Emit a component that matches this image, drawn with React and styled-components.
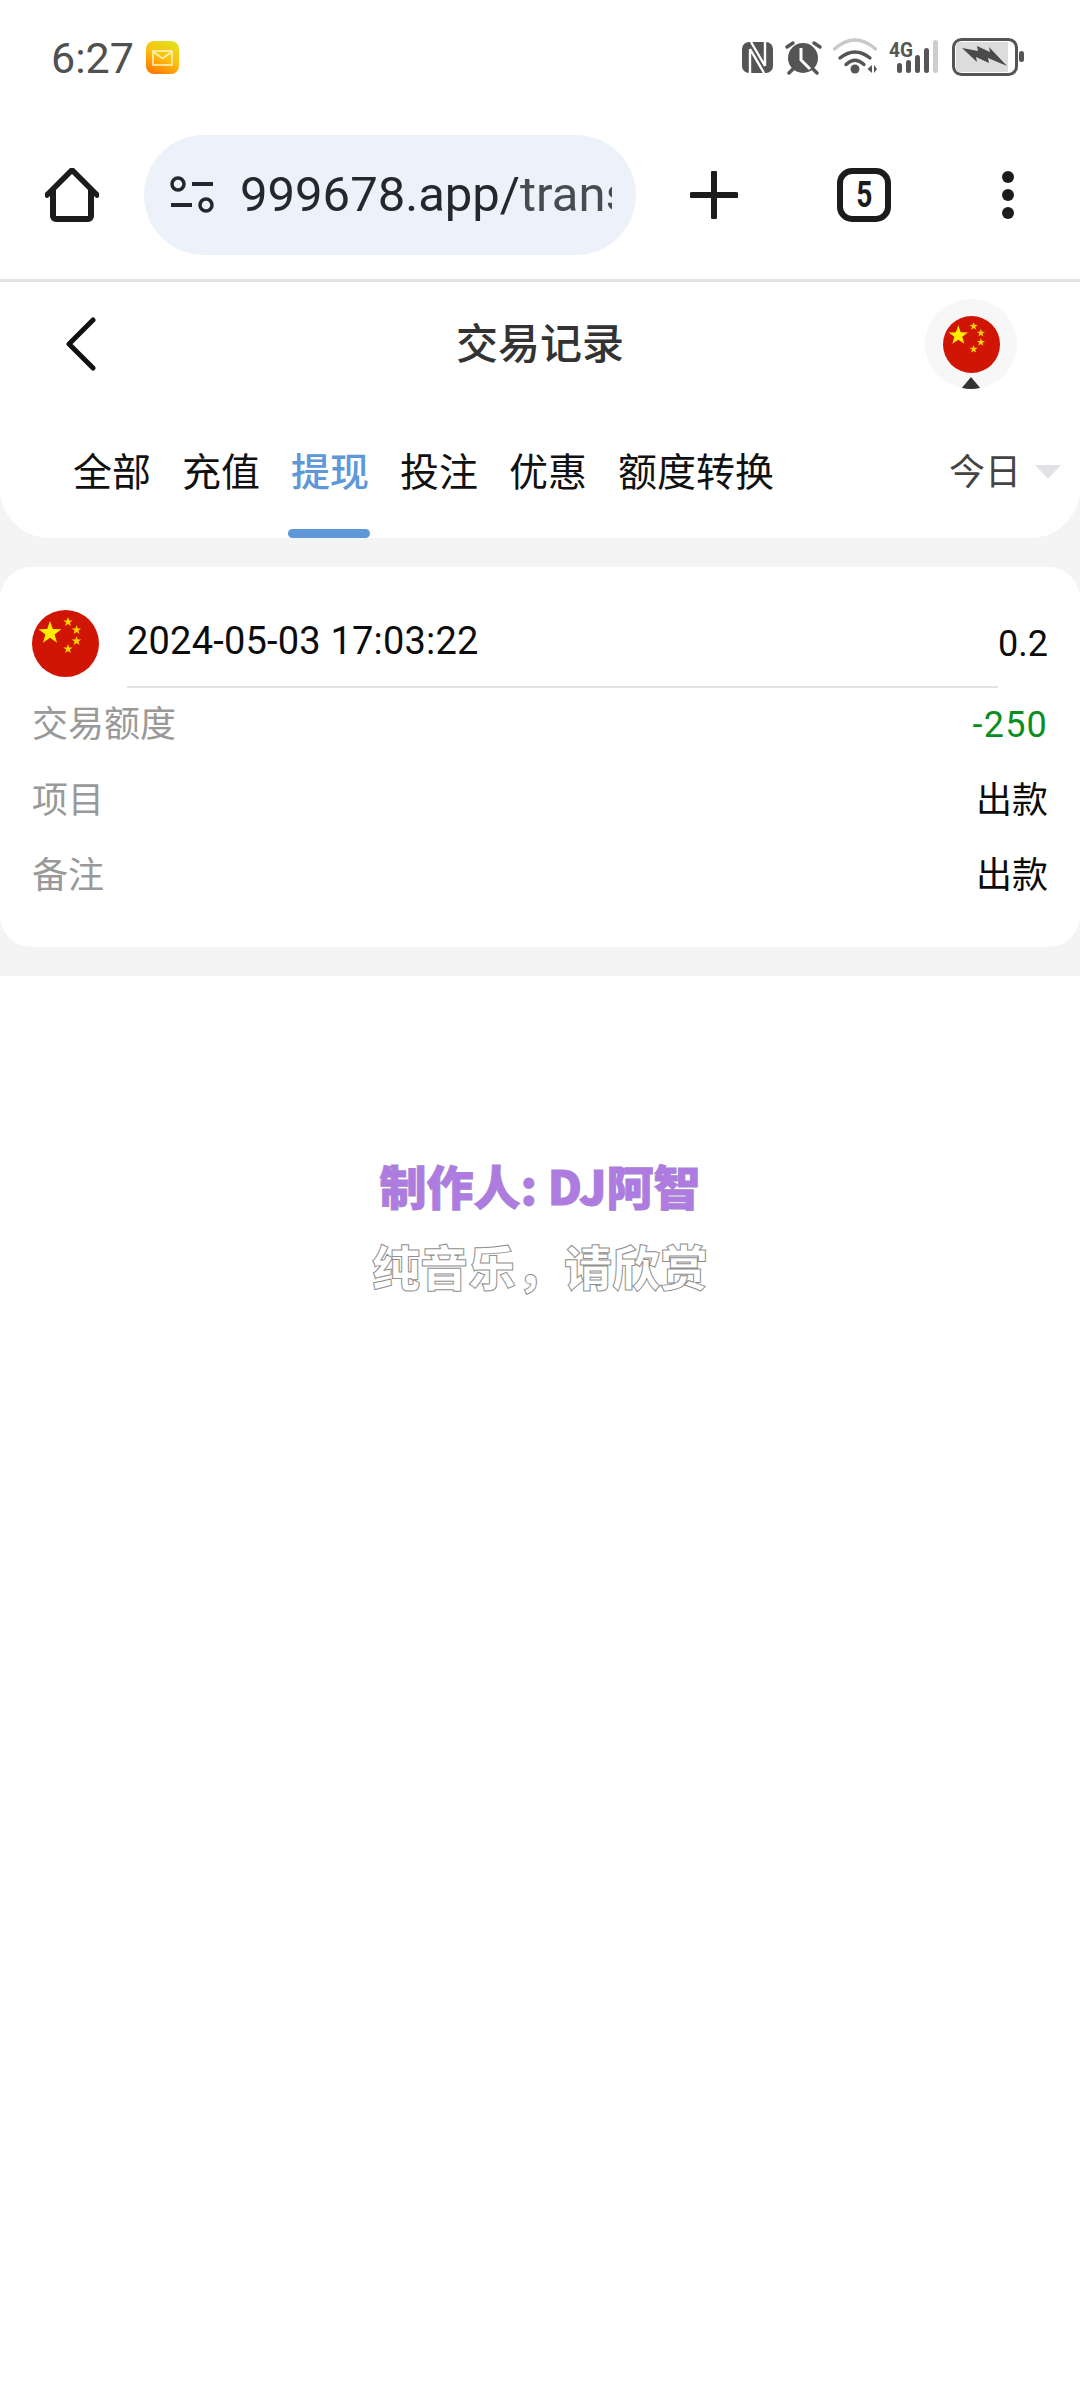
import React from 'react';
import styled, { createGlobalStyle } from 'styled-components';

const SANS = '"Roboto", "Noto Sans CJK SC", sans-serif';
const CJK = '"Noto Sans CJK SC", "Roboto", sans-serif';

const GlobalStyle = createGlobalStyle`
  html, body {
    margin: 0;
    padding: 0;
    background: #fff;
    font-family: ${SANS};
  }
  * { box-sizing: border-box; }
`;

const Page = styled.div`
  width: 1080px;
  min-height: 2400px;
  background: #fff;
`;

const StatusBar = styled.div`
  height: 135px;
  padding: 38px 56px 0 51px;
  display: flex;
  align-items: flex-start;
`;

const Clock = styled.span`
  font-size: 43px;
  line-height: 40px;
  color: #505050;
`;

const MailBadge = styled.svg`
  width: 33px;
  height: 33px;
  margin: 3px 0 0 12px;
`;

const StatusIcons = styled.div`
  margin-left: auto;
  display: flex;
  align-items: flex-start;
`;

const StatusIcon = styled.svg`
  display: block;
  width: ${p => p.$w}px;
  height: 38px;
  margin-left: ${p => p.$gap}px;
`;

const Toolbar = styled.div`
  height: 147px;
  padding: 0 0 24px 45px;
  display: flex;
  align-items: center;
  border-bottom: 3px solid #e2e2e2;
`;

const IconButton = styled.svg`
  flex: none;
  display: block;
  width: ${p => p.$w}px;
  height: ${p => p.$h || p.$w}px;
  margin-left: ${p => p.$gap || 0}px;
`;

const UrlPill = styled.div`
  flex: none;
  width: 492px;
  height: 120px;
  margin-left: 45px;
  padding: 0 24px 0 26px;
  border-radius: 60px;
  background: #ecf1fa;
  display: flex;
  align-items: center;
`;

const UrlClip = styled.div`
  margin-left: 26px;
  width: 372px;
  overflow: hidden;
  white-space: nowrap;
  font-size: 49px;
  line-height: 60px;
  color: #24282c;
`;

const UrlFade = styled.span`
  color: #474c50;
`;

const TabCount = styled.div`
  flex: none;
  width: 54px;
  height: 54px;
  margin-left: 99px;
  border: 6px solid #1c1c1c;
  border-radius: 15px;
  display: flex;
  align-items: center;
  justify-content: center;
  font-weight: 700;
  font-size: 36px;
  color: #1c1c1c;
`;

const TabDigit = styled.span`
  display: block;
  transform: scaleX(0.78);
`;

const Content = styled.div`
  background: #f4f4f4;
`;

const Header = styled.div`
  background: #fff;
  border-radius: 0 0 50px 50px;
`;

const TitleRow = styled.div`
  height: 107px;
  padding: 17px 63px 0 63px;
  display: grid;
  grid-template-columns: 1fr auto 1fr;
  align-items: center;
`;

const BackIcon = styled.svg`
  display: block;
  width: 30px;
  height: 54px;
  margin-left: 3px;
`;

const Title = styled.h1`
  margin: 0 0 7px;
  font-family: ${CJK};
  font-size: 42px;
  font-weight: 500;
  line-height: 56px;
  color: #333;
`;

const LangButton = styled.div`
  justify-self: end;
  width: 92px;
  height: 90px;
  border-radius: 50%;
  background: #f7f7f7;
  position: relative;
  overflow: hidden;
  display: flex;
  justify-content: center;
  padding-top: 17px;
`;

const LangCaret = styled.span`
  position: absolute;
  left: 36px;
  bottom: 0;
  width: 0;
  height: 0;
  border-left: 10px solid transparent;
  border-right: 10px solid transparent;
  border-bottom: 12px solid #333;
`;

const TabRow = styled.div`
  padding: 56px 19px 0 73px;
  display: flex;
  align-items: flex-start;
`;

const Tab = styled.div`
  margin-right: 31px;
  display: flex;
  flex-direction: column;
  align-items: center;
  font-family: ${CJK};
  font-size: 39px;
  line-height: 48px;
  font-weight: ${p => (p.$active ? 500 : 400)};
  color: ${p => (p.$active ? '#5e98d8' : '#111')};
`;

const TabMark = styled.span`
  display: block;
  align-self: stretch;
  height: 9px;
  margin: 36px -1px 0 -3px;
  border-radius: 5px;
  background: ${p => (p.$active ? '#5e98d8' : 'transparent')};
`;

const RangePicker = styled.div`
  margin-left: auto;
  display: flex;
  align-items: center;
  height: 48px;
  font-family: ${CJK};
  font-size: 36px;
  color: #444;
`;

const RangeCaret = styled.span`
  width: 0;
  height: 0;
  margin: 6px 0 0 14px;
  border-left: 13px solid transparent;
  border-right: 13px solid transparent;
  border-top: 14px solid #e0e2e6;
`;

const ListArea = styled.div`
  padding: 29px 0;
`;

const RecordCard = styled.div`
  background: #fff;
  border-radius: 32px;
  padding: 43px 32px 32px;
`;

const RecordTop = styled.div`
  display: flex;
  align-items: center;
  height: 67px;
`;

const RecordDate = styled.span`
  margin-left: 28px;
  padding-bottom: 5px;
  font-size: 38px;
  letter-spacing: 0.2px;
  color: #0c0c0c;
`;

const RecordAmount = styled.span`
  margin-left: auto;
  font-size: 36px;
  color: #0c0c0c;
`;

const RecordDivider = styled.div`
  height: 2px;
  margin: 9px 50px 0 95px;
  background: #e3e3e3;
`;

const RecordRow = styled.div`
  height: 75.5px;
  padding-bottom: 9px;
  display: flex;
  align-items: center;
  justify-content: space-between;
  font-size: 36px;
  font-family: ${CJK};
`;

const RowLabel = styled.span`
  color: #999;
`;

const RowValue = styled.span`
  color: #0c0c0c;
`;

const OutAmount = styled.span`
  margin-top: 7px;
  font-family: ${SANS};
  letter-spacing: 1.2px;
  color: #0a8f1e;
`;

const Credits = styled.div`
  padding-top: 169px;
  text-align: center;
  font-family: ${CJK};
  font-size: 48px;
  font-weight: 900;
  line-height: 80px;
`;

const CreditMaker = styled.div`
  color: #ae7ce0;
  font-size: 47px;
  paint-order: stroke fill;
  -webkit-text-stroke: 1px #a48cc4;
`;

const CreditNote = styled.div`
  color: #fff;
  -webkit-text-stroke: 1px #909090;
`;

// five point star polygon around (cx, cy)
const starPoints = (cx, cy, r) => {
  const pts = [];
  for (let i = 0; i < 10; i++) {
    const rad = i % 2 === 0 ? r : r * 0.4;
    const a = -Math.PI / 2 + (i * Math.PI) / 5;
    pts.push(`${(cx + rad * Math.cos(a)).toFixed(2)},${(cy + rad * Math.sin(a)).toFixed(2)}`);
  }
  return pts.join(' ');
};

const FlagSvg = styled.svg`
  flex: none;
  display: block;
  width: ${p => p.$size}px;
  height: ${p => p.$size}px;
`;

const CnFlag = ({ size }) => (
  <FlagSvg $size={size} viewBox="0 0 67 67">
    <circle cx="33.5" cy="33.5" r="33.5" fill="#d01504" />
    <polygon points={starPoints(18, 23, 12)} fill="#ffee00" />
    <polygon points={starPoints(36, 12, 5)} fill="#ffd400" />
    <polygon points={starPoints(44.5, 20, 5)} fill="#ffd400" />
    <polygon points={starPoints(44.5, 31, 5)} fill="#ffd400" />
    <polygon points={starPoints(36, 39, 5)} fill="#ffd400" />
  </FlagSvg>
);

const MailIcon = () => (
  <MailBadge viewBox="0 0 33 33">
    <defs>
      <linearGradient id="mailBg" x1="0.8" y1="0" x2="0.3" y2="1">
        <stop offset="0" stopColor="#dfe31c" />
        <stop offset="0.5" stopColor="#fdbf10" />
        <stop offset="1" stopColor="#ff7a00" />
      </linearGradient>
    </defs>
    <rect width="33" height="33" rx="8" fill="url(#mailBg)" />
    <rect x="7" y="10" width="19" height="14" fill="none" stroke="#fff3b8" strokeWidth="1.6" />
    <path d="M7.5 11 L16.5 17.5 L25.5 11" fill="none" stroke="#fff3b8" strokeWidth="1.6" />
  </MailBadge>
);

const NfcIcon = () => (
  <StatusIcon $w={31} $gap={0} viewBox="0 0 31 38">
    <rect x="0" y="4" width="31" height="31" rx="7" fill="#555" />
    <path d="M8 35V11M23 4v24M9 4l14 24M8 11l14 24" fill="none" stroke="#fff" strokeWidth="2.4" />
  </StatusIcon>
);

const AlarmIcon = () => (
  <StatusIcon $w={37} $gap={12} viewBox="0 0 37 38">
    <circle cx="18" cy="20" r="15" fill="#555" />
    <path d="M16 10v12l9 9" fill="none" stroke="#fff" strokeWidth="3" />
    <path d="M2 9l6-4M35 9l-6-4M4 35l4-4M32 35l-4-4" stroke="#555" strokeWidth="3.4" strokeLinecap="round" />
  </StatusIcon>
);

const WifiIcon = () => (
  <StatusIcon $w={44} $gap={11} viewBox="0 0 44 38">
    <path d="M1.5 11Q22 -7 42.5 11" fill="none" stroke="#c9c9c9" strokeWidth="3.4" strokeLinecap="round" />
    <path d="M7 20Q22 8 37 20" fill="none" stroke="#555" strokeWidth="3.4" strokeLinecap="round" />
    <path d="M13 26.500Q22 18 31 26.500" fill="none" stroke="#555" strokeWidth="3.4" strokeLinecap="round" />
    <circle cx="22" cy="31" r="4.500" fill="#555" />
    <path d="M39 27v8l-4.500-4zM41 27v8l3-4z" fill="#555" />
  </StatusIcon>
);

const SignalIcon = () => (
  <StatusIcon $w={50} $gap={12} viewBox="0 0 50 38">
    <text x="0" y="18.500" fontFamily="Roboto, sans-serif" fontWeight="700" fontSize="21" fill="#555" textLength="24" lengthAdjust="spacingAndGlyphs">4G</text>
    <rect x="8" y="25" width="5" height="10" rx="2.500" fill="#555" />
    <rect x="17" y="22" width="5" height="13" rx="2.500" fill="#555" />
    <rect x="26" y="17" width="5" height="18" rx="2.500" fill="#555" />
    <rect x="35" y="10" width="5" height="25" rx="2.500" fill="#555" />
    <rect x="44" y="2" width="5" height="33" rx="2.500" fill="#cdcdcd" />
  </StatusIcon>
);

const BatteryIcon = () => (
  <StatusIcon $w={72} $gap={13} viewBox="0 0 72 38">
    <rect x="1.500" y="1.500" width="63" height="35" rx="8" fill="#fff" stroke="#555" strokeWidth="3" />
    <path d="M4 7a3 3 0 0 1 3-3h49v30H7a3 3 0 0 1-3-3z" fill="#dcdcdc" />
    <path d="M10 10l16 3-1-5 13 6-1-5 18 19-19-8 1 5-13-6 1 5z" fill="#4a4a4a" />
    <rect x="67" y="13" width="5" height="11" rx="2.500" fill="#555" />
  </StatusIcon>
);

const tabs = ['全部', '充值', '提现', '投注', '优惠', '额度转换'];

const App = () => {
  return (
    <Page>
      <GlobalStyle />
      <StatusBar>
        <Clock>6:27</Clock>
        <MailIcon />
        <StatusIcons>
          <NfcIcon />
          <AlarmIcon />
          <WifiIcon />
          <SignalIcon />
          <BatteryIcon />
        </StatusIcons>
      </StatusBar>

      <Toolbar>
        <IconButton $w={54} viewBox="0 0 54 54">
          <path d="M2 27L27 2l25 25" fill="none" stroke="#1c1c1c" strokeWidth="5.500" strokeLinecap="round" strokeLinejoin="round" />
          <path d="M8 22v26a3 3 0 0 0 3 3h32a3 3 0 0 0 3-3V22" fill="none" stroke="#1c1c1c" strokeWidth="6" strokeLinejoin="round" />
        </IconButton>
        <UrlPill>
          <IconButton $w={44} $h={40} viewBox="0 0 44 40">
            <circle cx="8" cy="9" r="6" fill="none" stroke="#24282c" strokeWidth="3.500" />
            <circle cx="36" cy="30" r="6" fill="none" stroke="#24282c" strokeWidth="3.500" />
            <path d="M22 9h21M1 30h21" stroke="#24282c" strokeWidth="4" />
          </IconButton>
          <UrlClip>999678.app/<UrlFade>trans</UrlFade></UrlClip>
        </UrlPill>
        <IconButton $w={48} $gap={54} viewBox="0 0 48 48">
          <path d="M24 2v44M2 24h44" stroke="#1c1c1c" strokeWidth="6" strokeLinecap="round" />
        </IconButton>
        <TabCount><TabDigit>5</TabDigit></TabCount>
        <IconButton $w={12} $h={48} $gap={111} viewBox="0 0 12 48">
          <circle cx="6" cy="6" r="6" fill="#1c1c1c" />
          <circle cx="6" cy="24" r="6" fill="#1c1c1c" />
          <circle cx="6" cy="42" r="6" fill="#1c1c1c" />
        </IconButton>
      </Toolbar>

      <Content>
        <Header>
          <TitleRow>
            <BackIcon viewBox="0 0 30 54">
              <path d="M27 3L3 27l24 24" fill="none" stroke="#111" strokeWidth="5" strokeLinecap="round" strokeLinejoin="round" />
            </BackIcon>
            <Title>交易记录</Title>
            <LangButton>
              <CnFlag size={57} />
              <LangCaret />
            </LangButton>
          </TitleRow>
          <TabRow>
            {tabs.map(t => (
              <Tab key={t} $active={t === '提现'}>
                {t}
                <TabMark $active={t === '提现'} />
              </Tab>
            ))}
            <RangePicker>
              今日
              <RangeCaret />
            </RangePicker>
          </TabRow>
        </Header>

        <ListArea>
          <RecordCard>
            <RecordTop>
              <CnFlag size={67} />
              <RecordDate>2024-05-03 17:03:22</RecordDate>
              <RecordAmount>0.2</RecordAmount>
            </RecordTop>
            <RecordDivider />
            <RecordRow>
              <RowLabel>交易额度</RowLabel>
              <OutAmount>-250</OutAmount>
            </RecordRow>
            <RecordRow>
              <RowLabel>项目</RowLabel>
              <RowValue>出款</RowValue>
            </RecordRow>
            <RecordRow>
              <RowLabel>备注</RowLabel>
              <RowValue>出款</RowValue>
            </RecordRow>
          </RecordCard>
        </ListArea>
      </Content>

      <Credits>
        <CreditMaker>制作人: DJ阿智</CreditMaker>
        <CreditNote>纯音乐，请欣赏</CreditNote>
      </Credits>
    </Page>
  );
};

export default App;
